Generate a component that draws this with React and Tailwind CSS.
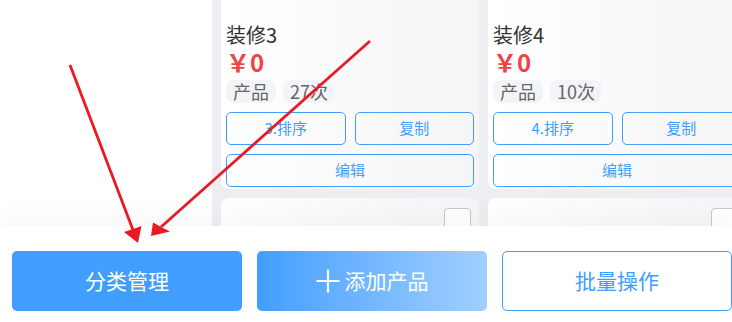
import React from 'react';

const products = [
  { id: 3, name: '装修3', price: 0, count: 27 },
  { id: 4, name: '装修4', price: 0, count: 10 },
];

function ProductCard({ item }) {
  return (
    <div className="w-[258px] shrink-0 rounded-lg bg-linear-to-r from-white to-[#f5f5f7] px-[5px] pt-[32px] pb-[2px]">
      <div className="text-[20px] leading-[26px] text-[#333]">{item.name}</div>
      <div className="text-[24px] leading-[28px] font-bold text-[#f04343]">￥{item.price}</div>
      <div className="mt-[4px] flex gap-[7px]">
        <span className="h-[23px] rounded-[8px] bg-[#f3f4f8] px-[7px] text-[18px] leading-[23px] text-[#666]">产品</span>
        <span className="h-[23px] rounded-[8px] bg-[#f3f4f8] px-[7px] text-[18px] leading-[23px] text-[#666]">{item.count}次</span>
      </div>
      <div className="mt-[9px] grid grid-cols-2 gap-[9px]">
        <button className="h-[33px] rounded-[5px] border border-[#409eff] text-[15px] text-[#409eff]">{item.id}.排序</button>
        <button className="h-[33px] rounded-[5px] border border-[#409eff] text-[15px] text-[#409eff]">复制</button>
        <button className="col-span-2 h-[33px] rounded-[5px] border border-[#409eff] text-[15px] text-[#409eff]">编辑</button>
      </div>
    </div>
  );
}

function EmptyCard() {
  return (
    <div className="flex h-[80px] w-[258px] shrink-0 justify-end rounded-lg bg-linear-to-r from-white to-[#f5f5f7] pt-[10px] pr-[8px]">
      <div className="h-[27px] w-[27px] rounded-[4px] border border-[#c5c7cb] bg-white" />
    </div>
  );
}

// red annotation arrows drawn over the screenshot
function Arrows() {
  return (
    <svg className="pointer-events-none absolute inset-0 z-20" width="732" height="322">
      <line x1="70" y1="65" x2="133" y2="230" stroke="#e91a23" strokeWidth="2.8" />
      <polygon points="138,243 124,232 133,229 141.5,226" fill="#e91a23" />
      <line x1="370" y1="41" x2="161" y2="227" stroke="#e91a23" strokeWidth="2.8" />
      <polygon points="151,236 153,222.5 161,227 170,231.5" fill="#e91a23" />
    </svg>
  );
}

export default function App() {
  return (
    <div className="relative flex h-[322px] w-[732px] flex-col overflow-hidden bg-white font-['Noto_Sans_CJK_SC','Noto_Sans',sans-serif]">
      <div className="flex h-[226px] overflow-hidden">
        {/* category sidebar */}
        <div className="w-[212px] shrink-0 bg-white" />
        <div className="flex-1 overflow-hidden bg-[#eceef2] px-[9px]">
          <div className="-mt-[10px] flex flex-col gap-[9px]">
            <div className="flex gap-[9px]">
              {products.map(p => <ProductCard key={p.id} item={p} />)}
            </div>
            <div className="flex gap-[9px]">
              <EmptyCard />
              <EmptyCard />
            </div>
          </div>
        </div>
      </div>

      {/* bottom action bar */}
      <div className="relative z-10 flex h-[96px] gap-[15px] bg-white pt-[25px] pl-[12px] shadow-[0_-8px_30px_rgba(0,0,0,0.035)]">
        <button className="h-[60px] w-[230px] rounded-[5px] bg-[#409eff] text-[21px] text-white">分类管理</button>
        <button className="flex h-[60px] w-[230px] items-center justify-center gap-[5px] rounded-[5px] bg-linear-to-r from-[#409eff] to-[#a0cfff] text-[21px] text-white">
          <svg width="24" height="24" viewBox="0 0 24 24">
            <path d="M12 0.5V23.5M0.5 12H23.5" stroke="#fff" strokeWidth="2.2" />
          </svg>
          添加产品
        </button>
        <button className="h-[60px] w-[230px] rounded-[5px] border border-[#409eff] bg-white text-[21px] text-[#409eff]">批量操作</button>
      </div>

      <Arrows />
    </div>
  );
}
